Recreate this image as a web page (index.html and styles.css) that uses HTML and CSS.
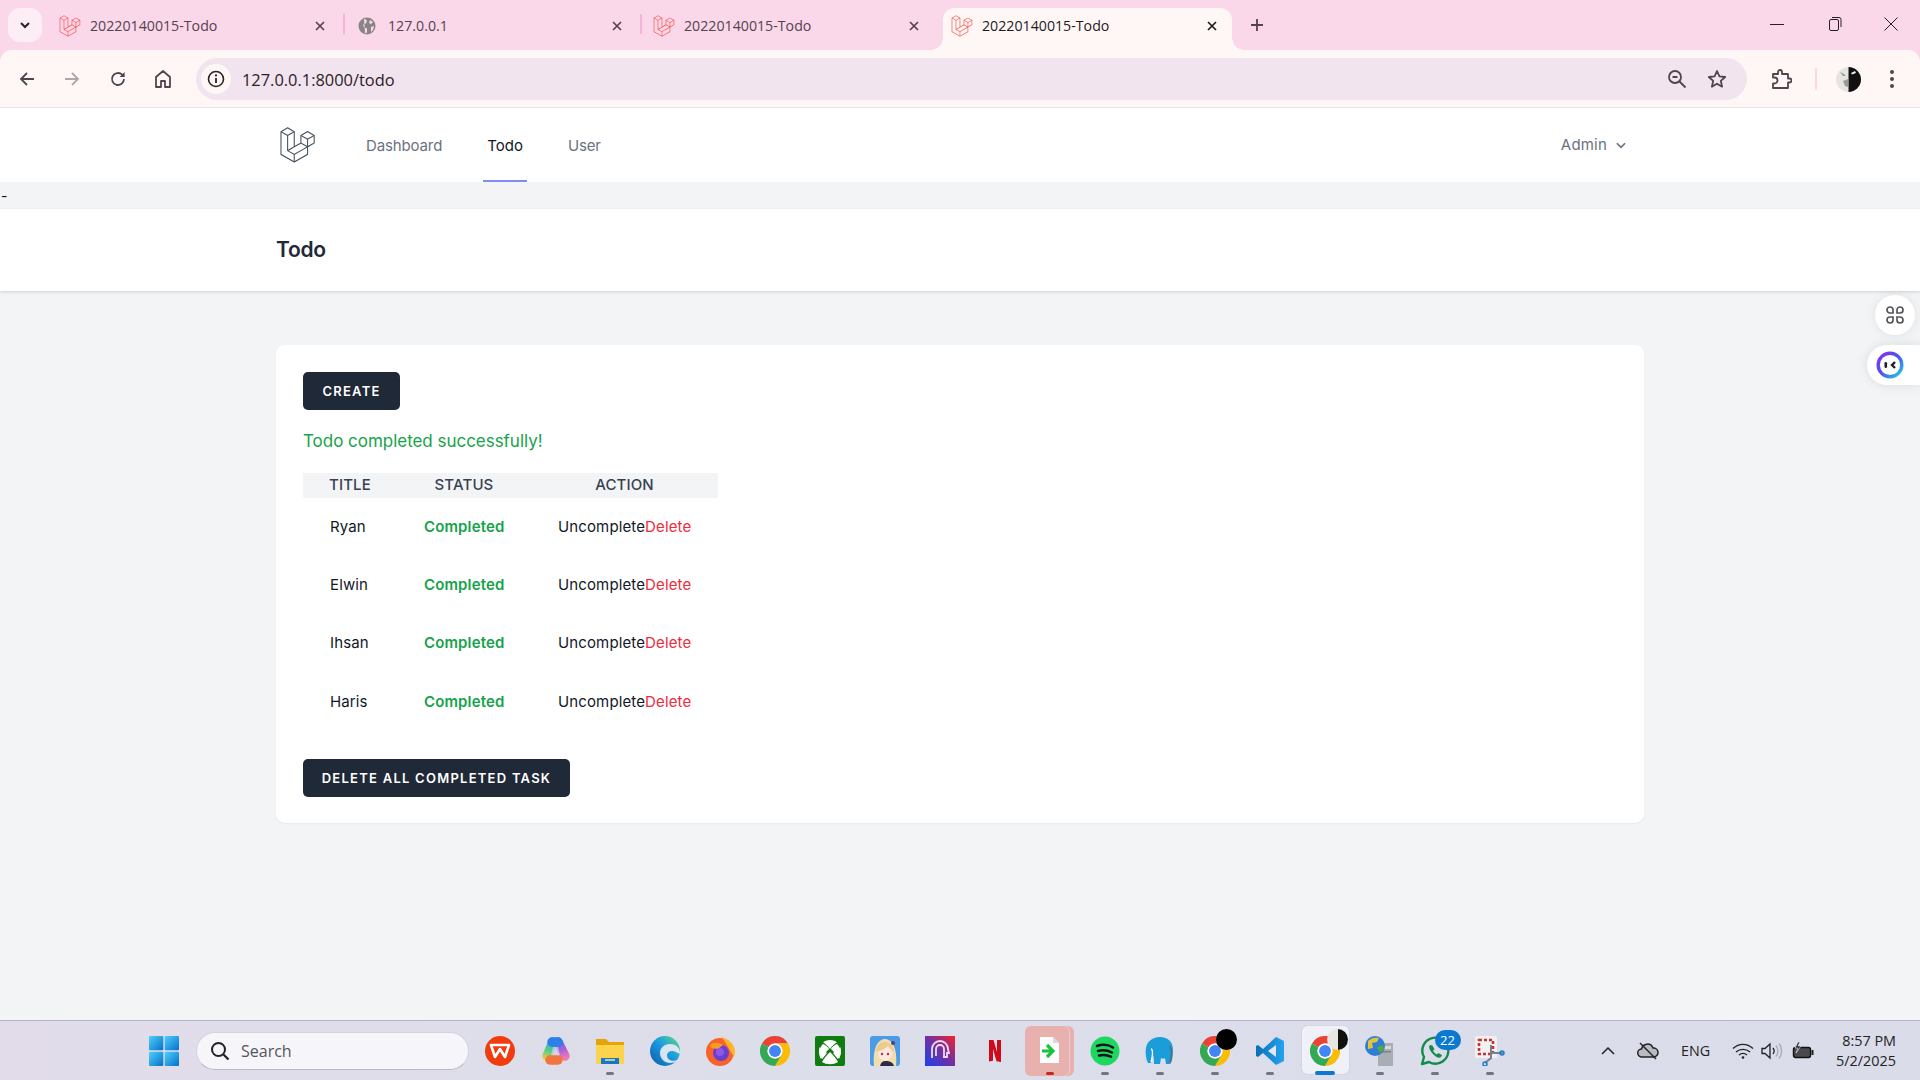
FILE: index.html
```html
<!DOCTYPE html>
<html lang="en">
<head>
    <meta charset="UTF-8">
    <title>20220140015-Todo</title>
    <link rel="stylesheet" href="styles.css">
</head>
<body>
<svg class="defs" aria-hidden="true">
    <defs>
        <linearGradient id="gWin" x1="0" y1="0" x2="1" y2="1"><stop offset="0" stop-color="#4fd0fb"/><stop offset="1" stop-color="#0670c9"/></linearGradient>
        <linearGradient id="gCopL" gradientUnits="userSpaceOnUse" x1="13" y1="5" x2="6" y2="24"><stop offset="0" stop-color="#2aa5e0"/><stop offset=".5" stop-color="#4fd08a"/><stop offset="1" stop-color="#f7c53f"/></linearGradient>
        <linearGradient id="gCopR" gradientUnits="userSpaceOnUse" x1="18" y1="5" x2="24" y2="22"><stop offset="0" stop-color="#4a6fe8"/><stop offset=".5" stop-color="#a55fe0"/><stop offset="1" stop-color="#ee78b0"/></linearGradient>
        <linearGradient id="gEdge" x1="0" y1="1" x2="1" y2="0"><stop offset="0" stop-color="#0c59a4"/><stop offset=".55" stop-color="#1b9de2"/><stop offset="1" stop-color="#5fe07a"/></linearGradient>
        <linearGradient id="gApp" x1="0" y1="1" x2="1" y2="0"><stop offset="0" stop-color="#1742f0"/><stop offset=".55" stop-color="#7a2f9a"/><stop offset="1" stop-color="#f5222d"/></linearGradient>
        <linearGradient id="gRing" x1="0" y1="0" x2="1" y2="1"><stop offset="0" stop-color="#8a2ff0"/><stop offset=".5" stop-color="#4a55f0"/><stop offset="1" stop-color="#1fd0e8"/></linearGradient>
        <linearGradient id="gVs" x1="0" y1="0" x2="1" y2="0"><stop offset="0" stop-color="#0a6fb8"/><stop offset="1" stop-color="#23a4ee"/></linearGradient>
        <symbol id="laravel" viewBox="0 0 316 316">
            <path d="M305.8 81.125C305.77 80.995 305.69 80.885 305.65 80.755C305.56 80.525 305.49 80.285 305.37 80.075C305.29 79.935 305.17 79.815 305.07 79.685C304.94 79.515 304.83 79.325 304.68 79.175C304.55 79.045 304.39 78.955 304.25 78.845C304.09 78.715 303.95 78.575 303.77 78.475L251.32 48.275C249.97 47.495 248.31 47.495 246.96 48.275L194.51 78.475C194.33 78.575 194.19 78.725 194.03 78.845C193.89 78.955 193.73 79.045 193.6 79.175C193.45 79.325 193.34 79.515 193.21 79.685C193.11 79.815 192.99 79.935 192.91 80.075C192.79 80.285 192.71 80.525 192.63 80.755C192.58 80.875 192.51 80.995 192.48 81.125C192.38 81.495 192.33 81.875 192.33 82.265V139.625L148.62 164.795V52.575C148.62 52.185 148.57 51.805 148.47 51.435C148.44 51.305 148.36 51.195 148.32 51.065C148.23 50.835 148.16 50.595 148.04 50.385C147.96 50.245 147.84 50.125 147.74 49.995C147.61 49.825 147.5 49.635 147.35 49.485C147.22 49.355 147.06 49.265 146.92 49.155C146.76 49.025 146.62 48.885 146.44 48.785L93.99 18.585C92.64 17.805 90.98 17.805 89.63 18.585L37.18 48.785C37 48.885 36.86 49.035 36.7 49.155C36.56 49.265 36.4 49.355 36.27 49.485C36.12 49.635 36.01 49.825 35.88 49.995C35.78 50.125 35.66 50.245 35.58 50.385C35.46 50.595 35.38 50.835 35.3 51.065C35.25 51.185 35.18 51.305 35.15 51.435C35.05 51.805 35 52.185 35 52.575V232.235C35 233.795 35.84 235.245 37.19 236.025L142.1 296.425C142.33 296.555 142.58 296.635 142.83 296.725C142.95 296.765 143.06 296.835 143.18 296.865C143.55 296.965 143.93 297.015 144.31 297.015C144.69 297.015 145.07 296.965 145.44 296.865C145.56 296.835 145.67 296.765 145.79 296.725C146.04 296.635 146.3 296.555 146.53 296.425L251.44 236.025C252.8 235.245 253.63 233.805 253.63 232.235V174.875L303.82 145.975C305.18 145.195 306.01 143.755 306.01 142.185V82.265C305.99 81.875 305.94 81.495 305.84 81.125H305.8ZM144.2 227.205L100.57 202.515L146.39 176.135L196.66 147.195L240.33 172.335L208.29 190.625L144.2 227.205ZM244.75 114.995V164.795L226.39 154.225L201.03 139.625V89.825L219.39 100.395L244.75 114.995ZM249.12 57.105L292.81 82.265L249.12 107.425L205.43 82.265L249.12 57.105ZM114.49 184.425L96.13 194.995V85.305L121.49 70.705L139.85 60.135V169.815L114.49 184.425ZM91.76 27.425L135.45 52.585L91.76 77.745L48.07 52.585L91.76 27.425ZM43.67 60.135L62.03 70.705L87.39 85.305V202.545V202.555V202.565C87.39 202.735 87.44 202.895 87.46 203.055C87.49 203.265 87.49 203.485 87.55 203.695V203.715C87.6 203.885 87.69 204.045 87.76 204.205C87.84 204.385 87.89 204.575 87.99 204.745C87.99 204.745 87.99 204.755 88 204.755C88.09 204.905 88.22 205.035 88.33 205.175C88.45 205.335 88.55 205.495 88.69 205.635L88.7 205.645C88.82 205.765 88.98 205.855 89.12 205.965C89.28 206.085 89.42 206.225 89.59 206.325C89.6 206.325 89.6 206.325 89.61 206.335C89.62 206.335 89.62 206.345 89.63 206.345L139.87 234.775V285.065L43.67 229.705V60.135ZM244.75 229.705L148.58 285.075V234.775L219.8 194.115L244.75 179.875V229.705ZM297.2 139.625L253.49 164.795V114.995L278.85 100.395L297.21 89.825V139.625H297.2Z" fill="currentColor"/>
        </symbol>
        <symbol id="chrome" viewBox="0 0 48 48">
            <path d="M3.2 12A24 24 0 0 1 44.8 12H24A12 12 0 0 0 13.6 18Z" fill="#ea4335"/>
            <path d="M44.8 12A24 24 0 0 1 24 48L34.4 30A12 12 0 0 0 24 12Z" fill="#fbbc04"/>
            <path d="M24 48A24 24 0 0 1 3.2 12L13.6 18A12 12 0 0 0 34.4 30Z" fill="#34a853"/>
            <circle cx="24" cy="24" r="12" fill="#fff"/>
            <circle cx="24" cy="24" r="9.5" fill="#4285f4"/>
        </symbol>
        <symbol id="close" viewBox="0 0 12 12">
            <path d="M2 2l8 8M10 2l-8 8" fill="none" stroke="currentColor" stroke-width="1.7"/>
        </symbol>
    </defs>
</svg>

<!-- tab strip -->
<div class="tabstrip">
    <div class="tabmenu">
        <svg width="12" height="12" viewBox="0 0 12 12"><path d="M2 4l4 4 4-4" fill="none" stroke="#2b2128" stroke-width="2"/></svg>
    </div>
    <div class="tab">
        <svg class="fav"><use href="#laravel"/></svg>
        <span class="tab-title">20220140015-Todo</span>
        <svg class="tab-x"><use href="#close"/></svg>
    </div>
    <div class="tab">
        <svg class="fav globe" viewBox="0 0 20 20">
            <circle cx="10" cy="10" r="8.5" fill="#8a8486"/>
            <path d="M7 2.500l3 2-1 3-3 1 1 3 3 1v4l-2 .8M13 4l3 2-2 2-2-1zM14 11l3-1-1 4-2 2z" fill="#fbd7ea"/>
        </svg>
        <span class="tab-title">127.0.0.1</span>
        <svg class="tab-x"><use href="#close"/></svg>
    </div>
    <div class="tab tab-last">
        <svg class="fav"><use href="#laravel"/></svg>
        <span class="tab-title">20220140015-Todo</span>
        <svg class="tab-x"><use href="#close"/></svg>
    </div>
    <div class="tab tab-active">
        <svg class="fav"><use href="#laravel"/></svg>
        <span class="tab-title">20220140015-Todo</span>
        <svg class="tab-x"><use href="#close"/></svg>
    </div>
    <svg class="newtab" viewBox="0 0 14 14"><path d="M7 1v12M1 7h12" fill="none" stroke="#54434e" stroke-width="1.8"/></svg>
    <div class="winctl">
        <span class="winbtn"><svg width="14" height="14" viewBox="0 0 14 14"><path d="M0 7.500h14" stroke="#222" fill="none"/></svg></span>
        <span class="winbtn"><svg width="14" height="16" viewBox="0 0 14 16"><rect x="1.500" y="3.500" width="9" height="11" rx="1.500" fill="none" stroke="#222"/><path d="M4 1.500h7a2 2 0 0 1 2 2V11" fill="none" stroke="#222"/></svg></span>
        <span class="winbtn"><svg width="14" height="14" viewBox="0 0 14 14"><path d="M.5.5l13 13M13.500.5l-13 13" stroke="#222" fill="none"/></svg></span>
    </div>
</div>

<!-- toolbar -->
<div class="toolbar">
    <div class="navbtns">
        <span class="tbtn"><svg width="18" height="18" viewBox="0 0 18 18"><path d="M16 9H3M9 3L3 9l6 6" fill="none" stroke="#54434e" stroke-width="1.8"/></svg></span>
        <span class="tbtn"><svg width="18" height="18" viewBox="0 0 18 18"><path d="M2 9h13M9 3l6 6-6 6" fill="none" stroke="#b0a6ab" stroke-width="1.8"/></svg></span>
        <span class="tbtn"><svg width="18" height="18" viewBox="0 0 18 18"><path d="M15 9a6 6 0 1 1-1.800-4.300L15 6.500" fill="none" stroke="#54434e" stroke-width="1.8"/><path d="M15.600 2v5h-5z" fill="#54434e"/></svg></span>
        <span class="tbtn"><svg width="20" height="20" viewBox="0 0 20 20"><path d="M3 18V8l7-6 7 6v10h-5v-6H8v6z" fill="none" stroke="#54434e" stroke-width="1.8" stroke-linejoin="round"/></svg></span>
    </div>
    <div class="omnibox">
        <span class="siteinfo"><svg width="18" height="18" viewBox="0 0 18 18"><circle cx="9" cy="9" r="7.500" fill="none" stroke="#2b2128" stroke-width="1.6"/><path d="M9 8v5" stroke="#2b2128" stroke-width="1.8"/><circle cx="9" cy="5.400" r="1.100" fill="#2b2128"/></svg></span>
        <span class="url">127.0.0.1:8000/todo</span>
        <span class="omni-icons">
            <span class="tbtn-s"><svg width="20" height="20" viewBox="0 0 20 20"><circle cx="8" cy="8" r="6" fill="none" stroke="#54434e" stroke-width="1.8"/><path d="M5.500 8h5M12.500 12.500l6 6" stroke="#54434e" stroke-width="1.8"/></svg></span>
            <span class="tbtn-s"><svg width="20" height="20" viewBox="0 0 20 20"><path d="M10 2l2.400 5.400 5.800.6-4.400 3.900 1.300 5.800L10 14.700l-5.100 3 1.300-5.800L1.800 8l5.800-.6z" fill="none" stroke="#54434e" stroke-width="1.8" stroke-linejoin="round"/></svg></span>
        </span>
    </div>
    <span class="tbtn ext"><svg width="22" height="22" viewBox="0 0 22 22"><path d="M3 6h5V4a2 2 0 0 1 4 0v2h6v4.500h1.500a2 2 0 0 1 0 4H18V20H3v-4.500h1.500a3 3 0 0 0 0-6H3z" fill="none" stroke="#54434e" stroke-width="1.8" stroke-linejoin="round"/></svg></span>
    <span class="tb-sep"></span>
    <span class="profile"><svg width="25" height="25" viewBox="0 0 25 25"><path d="M12.500 0a12.500 12.500 0 0 0 0 25z" fill="#e6e4e0"/><path d="M12.500 0a12.500 12.500 0 0 1 0 25z" fill="#111"/><path d="M15 6l4-2 1 2-4 1.500z" fill="#eee"/><path d="M4 5l4 2 2 2-3 0zM7 14l5-2v8l-3-1z" fill="#9c9a96"/></svg></span>
    <span class="tbtn kebab"><svg width="6" height="20" viewBox="0 0 6 20"><circle cx="3" cy="3" r="2" fill="#54434e"/><circle cx="3" cy="10" r="2" fill="#54434e"/><circle cx="3" cy="17" r="2" fill="#54434e"/></svg></span>
</div>

<!-- laravel page -->
<div class="page">
    <nav class="topnav">
        <div class="wrap topnav-in">
            <svg class="applogo"><use href="#laravel"/></svg>
            <div class="navlinks">
                <a class="navlink">Dashboard</a>
                <a class="navlink navlink-on">Todo</a>
                <a class="navlink">User</a>
            </div>
            <div class="usermenu">
                Admin
                <svg width="14" height="14" viewBox="0 0 12 12"><path d="M2.500 4.500L6 8l3.500-3.500" fill="none" stroke="#6b7280" stroke-width="1.500"/></svg>
            </div>
        </div>
    </nav>
    <div class="dashline">-</div>
    <header class="pagehead">
        <div class="wrap"><h2 class="pagetitle">Todo</h2></div>
    </header>
    <main class="content">
        <div class="wrap card">
            <a class="btn">CREATE</a>
            <p class="flash">Todo completed successfully!</p>
            <table class="todos">
                <colgroup><col class="c-title"><col class="c-status"><col class="c-action"></colgroup>
                <thead>
                    <tr><th>TITLE</th><th>STATUS</th><th>ACTION</th></tr>
                </thead>
                <tbody>
                    <tr><td>Ryan</td><td class="done">Completed</td><td><a>Uncomplete</a><a class="del">Delete</a></td></tr>
                    <tr><td>Elwin</td><td class="done">Completed</td><td><a>Uncomplete</a><a class="del">Delete</a></td></tr>
                    <tr><td>Ihsan</td><td class="done">Completed</td><td><a>Uncomplete</a><a class="del">Delete</a></td></tr>
                    <tr><td>Haris</td><td class="done">Completed</td><td><a>Uncomplete</a><a class="del">Delete</a></td></tr>
                </tbody>
            </table>
            <a class="btn btn-all">DELETE ALL COMPLETED TASK</a>
        </div>
    </main>

    <!-- floating extension widgets -->
    <div class="float-a">
        <svg width="20" height="20" viewBox="0 0 20 20" fill="none" stroke="#54565c" stroke-width="1.700"><path d="M2 5a3 3 0 0 1 6 0v3H5a3 3 0 0 1-3-3zM12 5a3 3 0 0 1 6 0 3 3 0 0 1-3 3h-3zM2 15a3 3 0 0 1 3-3h3v3a3 3 0 0 1-6 0zM12 12h3a3 3 0 0 1 0 6 3 3 0 0 1-3-3z"/></svg>
    </div>
    <div class="float-b">
        <svg width="28" height="28" viewBox="0 0 28 28"><circle cx="14" cy="14" r="11.800" fill="none" stroke="url(#gRing)" stroke-width="3.400"/><rect x="8.500" y="11" width="2.600" height="6" rx="1.300" fill="#222"/><path d="M19 11l-3 3 3 3" fill="none" stroke="#222" stroke-width="2.400"/></svg>
    </div>
</div>

<!-- windows taskbar -->
<footer class="taskbar">
    <svg class="winlogo" viewBox="0 0 30 30">
        <rect x="0" y="0" width="14.300" height="14.300" rx="1" fill="url(#gWin)"/>
        <rect x="15.700" y="0" width="14.300" height="14.300" rx="1" fill="url(#gWin)"/>
        <rect x="0" y="15.700" width="14.300" height="14.300" rx="1" fill="url(#gWin)"/>
        <rect x="15.700" y="15.700" width="14.300" height="14.300" rx="1" fill="url(#gWin)"/>
    </svg>
    <div class="searchbox">
        <svg width="20" height="20" viewBox="0 0 20 20"><circle cx="8.500" cy="8.500" r="6.500" fill="none" stroke="#222" stroke-width="2"/><path d="M13.500 13.500l5 5" stroke="#222" stroke-width="2.200"/></svg>
        <span>Search</span>
    </div>
    <div class="apps">
        <span class="app"><svg class="ico" viewBox="0 0 30 30"><circle cx="15" cy="15" r="15" fill="#f03c0e"/><path d="M6 9h18l-4 12-5-8-5 8z" fill="none" stroke="#fff" stroke-width="2.600" stroke-linejoin="round"/></svg></span>
        <span class="app"><svg class="ico" viewBox="0 0 30 30" fill="none" stroke-width="9.500" stroke-linecap="round"><path d="M13 6L7 20" stroke="url(#gCopL)"/><path d="M18 6l7 14" stroke="url(#gCopR)"/><path d="M12 6h6" stroke="#2f7fe8"/><path d="M10 24h8" stroke="#f0763f"/><path d="M13 11h5l2 8h-9z" fill="#d6cfe6" stroke="none" opacity=".75"/></svg></span>
        <span class="app app-dot"><svg class="ico" viewBox="0 0 30 30"><path d="M1 3h10l3 3h15v22H1z" fill="#e5a50a"/><path d="M1 9h28v19H1z" fill="#fcd34d"/><path d="M6 22h18v6H6z" fill="#1478c9"/><path d="M10 24h10" stroke="#ffe08a" stroke-width="1.500"/></svg></span>
        <span class="app"><svg class="ico" viewBox="0 0 30 30"><circle cx="15" cy="15" r="15" fill="url(#gEdge)"/><path d="M30 17c0-6-5-9-10-9-6 0-10 4-10 9 0 6 5 10 10 10 3 0 6-1 8-3-6 2-11 0-11-5 0-2 2-4 5-4 4 0 8 4 8 2z" fill="#e9ebf2" opacity=".92"/></svg></span>
        <span class="app"><svg class="ico" viewBox="0 0 30 30"><circle cx="15" cy="16" r="14" fill="#f9632b"/><path d="M16 0c5 4 7 2 12 9 3 5 2 9 1 12L20 6z" fill="#fdb52c"/><circle cx="16" cy="17" r="8" fill="#6a3fd0"/><path d="M5 9c3-3 9-3 13 0l-5 4-7-1z" fill="#fa9a22"/><circle cx="15" cy="16" r="4" fill="#8d58e8"/></svg></span>
        <span class="app"><svg class="ico"><use href="#chrome"/></svg></span>
        <span class="app"><svg class="ico" viewBox="0 0 30 30"><rect width="30" height="30" rx="2" fill="#107c10"/><circle cx="15" cy="15" r="11" fill="#fff"/><path d="M6 5c4 2 7 5 9 8 2-3 5-6 9-8L27 10 18 17l8 10H4l8-10-9-7z" fill="#107c10"/><path d="M15 16c3 3 6 6 8 10-5 3-11 3-16 0 2-4 5-7 8-10zM8 8c3 1 5 3 6 5-3 3-6 6-8 10-3-5-2-11 2-15zM22 8c-3 1-5 3-6 5 3 3 6 6 8 10 3-5 2-11-2-15z" fill="#fff"/></svg></span>
        <span class="app"><svg class="ico" viewBox="0 0 30 30"><rect width="30" height="30" rx="3" fill="#4a9be8"/><path d="M4 30C3 20 4 4 15 3c11 1 12 17 11 27z" fill="#f3dcae"/><ellipse cx="15" cy="17" rx="7" ry="7.500" fill="#fbe8de"/><path d="M6 16c1-8 5-10 9-10s8 3 9 10c-3-2-5-5-6-6-3 3-8 5-12 6z" fill="#eccb8d"/><circle cx="12" cy="18" r="1.200" fill="#b0304f"/><circle cx="18" cy="18" r="1.200" fill="#b0304f"/><path d="M10 30c1-4 3-5 6-5s7 1 8 5z" fill="#2c2a4a"/><circle cx="23" cy="7" r="2" fill="#5b3a7a"/></svg></span>
        <span class="app"><svg class="ico" viewBox="0 0 30 30"><rect width="30" height="30" fill="url(#gApp)"/><path d="M7 22v-9a8 8 0 0 1 16 0c0 2 1 3 1 4h-2v4h-4M11 20v-7a4 4 0 0 1 8 0v7" fill="none" stroke="#e9dcf4" stroke-width="1.800"/></svg></span>
        <span class="app"><svg class="ico" viewBox="0 0 30 30"><path d="M9 4h4.500l3.500 12V4h4v22l-4.500-.8L13 13v11.800l-4 .8z" fill="#cf0a1a"/></svg></span>
        <span class="app app-open"><svg class="ico" viewBox="0 0 30 30"><path d="M6 2h13l6 6v20H6z" fill="#fdfdfd"/><path d="M19 2l6 6h-6z" fill="#d8d8d8"/><path d="M8 16h9M13 10l6 6-6 6" fill="none" stroke="#17c43c" stroke-width="3.200"/></svg></span>
        <span class="app app-dot"><svg class="ico" viewBox="0 0 30 30"><circle cx="15" cy="15" r="14.500" fill="#1ed760"/><path d="M7 10c6-2 11-1.500 16 1.500M8 15c5-1.500 9-1 14 1.500M9 19.500c4-1 8-.8 12 1.200" fill="none" stroke="#14141a" stroke-width="2.500" stroke-linecap="round"/></svg></span>
        <span class="app app-dot"><svg class="ico" viewBox="0 0 30 30"><path d="M15 1c8 0 13 5 13 13 0 6-1 12-3 14h-4l-1-6c-1 1-3 1-4 0l-1 6H9c0-3 0-6-1-9l-2 8H3C1 23 0 17 1 12 2 5 8 1 15 1z" fill="#1a9dd9"/><path d="M6 13c2 0 2 6 0 13" fill="none" stroke="#fff" stroke-width="1.300"/><path d="M25 10c2 5 2 11 0 17" fill="none" stroke="#5b6a78" stroke-width="1.500"/></svg></span>
        <span class="app app-dot"><svg class="ico"><use href="#chrome"/></svg><i class="blob blob-black"></i></span>
        <span class="app app-dot"><svg class="ico" viewBox="0 0 30 30"><path d="M21 1l8 4v20l-8 4-13-12-5 4-2-1V10l2-1 5 4z" fill="url(#gVs)"/><path d="M21 9v12l-8-6z" fill="#e4e6f0"/></svg></span>
        <span class="app app-active"><svg class="ico"><use href="#chrome"/></svg><i class="blob blob-half"></i></span>
        <span class="app app-dot"><svg class="ico" viewBox="0 0 30 30"><rect x="13" y="7" width="15" height="23" fill="#a9aeb3"/><rect x="15" y="10" width="11" height="3" fill="#d7dadd"/><rect x="15" y="15" width="11" height="1.500" fill="#7c8186"/><circle cx="10" cy="10" r="10" fill="#2f7fd6"/><path d="M3 5c3-3 7-4 11-3l-2 4-5 1 1 5-5 1z" fill="#e2c33a"/><path d="M12 11l6-2 1 5-4 3z" fill="#53a83c"/></svg></span>
        <span class="app app-dot"><svg class="ico" viewBox="0 0 30 30"><path d="M2 28l2-7A13 13 0 1 1 9 26z" fill="none" stroke="#128c4a" stroke-width="2.400" stroke-linejoin="round"/><path d="M10 9c-2 2 0 6 3 9s6 5 8 3l1-2-4-2-1 1.500c-2-1-3-2-4-4l1.500-1-2-4z" fill="#128c4a"/></svg><i class="badge">22</i></span>
        <span class="app app-dot"><svg class="ico" viewBox="0 0 30 30"><rect width="22" height="22" rx="2" fill="#f1f1f4"/><rect x="4" y="4" width="14" height="14" fill="none" stroke="#c8372d" stroke-width="2.600" stroke-dasharray="3 2"/><path d="M16 9v13l-6 5M15 17l13 0" fill="none" stroke="#78808a" stroke-width="2"/><circle cx="10" cy="28" r="2" fill="none" stroke="#1a7fd0" stroke-width="1.500"/><circle cx="27" cy="17" r="2" fill="none" stroke="#1a7fd0" stroke-width="1.500"/></svg></span>
    </div>
    <div class="tray">
        <svg class="t-chev" width="14" height="10" viewBox="0 0 14 10"><path d="M1 8l6-6 6 6" fill="none" stroke="#222" stroke-width="1.500"/></svg>
        <svg class="t-cloud" width="22" height="20" viewBox="0 0 22 20"><path d="M5 16a4 4 0 0 1-.5-8A6 6 0 0 1 16 7a4.500 4.500 0 0 1 1 9z" fill="#b9bac2" stroke="#222" stroke-width="1.500"/><path d="M3 2l16 16" stroke="#222" stroke-width="1.500"/></svg>
        <span class="t-lang">ENG</span>
        <svg class="t-wifi" width="22" height="18" viewBox="0 0 22 18" fill="none" stroke="#222" stroke-width="1.400"><path d="M1 6.500c6-5.500 14-5.500 20 0M4 10c4-3.500 10-3.500 14 0M7 13c2.500-2 5.500-2 8 0"/><circle cx="11" cy="15.500" r="1.300" fill="#222" stroke="none"/></svg>
        <svg class="t-vol" width="22" height="18" viewBox="0 0 22 18" fill="none" stroke-width="1.300"><path d="M1 6.500h3L9 2v14l-5-4.500H1z" stroke="#222"/><path d="M12 6c1.500 2 1.500 4 0 6" stroke="#222"/><path d="M15 3.500c2.500 3.500 2.500 7.500 0 11M18 1.500c3.500 4.500 3.500 10.500 0 15" stroke="#a8a9b3"/></svg>
        <svg class="t-batt" width="22" height="18" viewBox="0 0 22 18"><rect x="1.500" y="5.500" width="17" height="10" rx="2" fill="#4a4a4e" stroke="#111" stroke-width="1.400"/><rect x="19.500" y="8" width="2" height="5" fill="#222"/><path d="M6 0L3 6h3l-2 5 5-7H6l2-4z" fill="#222" stroke="#dcdeea" stroke-width=".7"/></svg>
        <div class="clock"><span>8:57 PM</span><span>5/2/2025</span></div>
    </div>
</footer>
</body>
</html>
```

FILE: styles.css
```css
* {
    margin: 0;
    padding: 0;
    box-sizing: border-box;
}

html, body {
    width: 1920px;
    height: 1080px;
    overflow: hidden;
}

body {
    display: flex;
    flex-direction: column;
    font-family: Inter, "Liberation Sans", sans-serif;
    background: #fbd7ea;
}

svg {
    display: block;
    flex: none;
}

.defs {
    width: 0;
    height: 0;
}

/* tab strip */
.tabstrip {
    height: 50px;
    flex: none;
    display: flex;
    align-items: flex-end;
    padding-left: 8px;
    background: #fbd7ea;
    font-family: "Open Sans", "Noto Sans", sans-serif;
}

.tabmenu {
    width: 34px;
    height: 34px;
    margin: 0 6px 8px 0;
    display: flex;
    align-items: center;
    justify-content: center;
    border-radius: 12px;
    background: #fdeef6;
}

.tab {
    width: 297px;
    height: 42px;
    display: flex;
    align-items: center;
    padding: 0 19px 7px 12px;
    color: #54434e;
    position: relative;
}

.tab::after {
    content: "";
    position: absolute;
    right: 0;
    top: 6px;
    width: 2px;
    height: 20px;
    background: #f8b2d8;
}

.tab-last::after {
    display: none;
}

.tab-active {
    width: 289px;
    margin: 0 4px;
    padding-left: 9px;
    padding-right: 14px;
    color: #1f1a1d;
    background: #fff7f6;
    border-radius: 12px 12px 0 0;
}

.tab-active::before,
.tab-active::after {
    content: "";
    position: absolute;
    top: auto;
    bottom: 0;
    width: 12px;
    height: 12px;
    background: radial-gradient(circle at 0 0, #fbd7ea 11.500px, #fff7f6 12px);
}

.tab-active::before {
    left: -12px;
}

.tab-active::after {
    left: auto;
    right: -12px;
    background: radial-gradient(circle at 100% 0, #fbd7ea 11.500px, #fff7f6 12px);
}

.fav {
    width: 24px;
    height: 24px;
    margin: 0 9px 0 -3px;
    color: #f9524a;
}

.globe {
    width: 20px;
    height: 20px;
    margin: 0 11px 0 0;
}

.tab-title {
    flex: 1;
    font-size: 14.200px;
    white-space: nowrap;
}

.tab-x {
    width: 12px;
    height: 12px;
}

.newtab {
    width: 14px;
    height: 14px;
    margin: 0 0 18px 14px;
}

.winctl {
    margin-left: auto;
    align-self: flex-start;
    display: flex;
    padding-right: 1px;
}

.winbtn {
    width: 56px;
    height: 48px;
    display: flex;
    align-items: center;
    justify-content: center;
}

.winbtn:first-child {
    margin-right: 2px;
    margin-left: -2px;
}

/* toolbar */
.toolbar {
    height: 58px;
    flex: none;
    display: flex;
    align-items: center;
    padding: 1px 4px 0;
    background: #fff7f6;
    border-bottom: 1px solid #f0dfe8;
    border-radius: 12px 12px 0 0;
}

.navbtns {
    display: flex;
}

.tbtn {
    width: 45.500px;
    height: 40px;
    display: flex;
    align-items: center;
    justify-content: center;
}

.omnibox {
    width: 1551px;
    height: 42px;
    margin-left: 10px;
    display: flex;
    align-items: center;
    padding: 0 10px 0 5px;
    border-radius: 21px;
    background: #f1e4ee;
    font-family: "Open Sans", "Noto Sans", sans-serif;
}

.siteinfo {
    width: 30px;
    height: 30px;
    display: flex;
    align-items: center;
    justify-content: center;
    border-radius: 50%;
    background: #fff7f6;
}

.url {
    margin-left: 11px;
    font-size: 16.400px;
    color: #2b2128;
}

.omni-icons {
    margin-left: auto;
    display: flex;
}

.tbtn-s {
    width: 40px;
    height: 40px;
    display: flex;
    align-items: center;
    justify-content: center;
}

.ext {
    margin-left: 11px;
}

.tb-sep {
    width: 2px;
    height: 22px;
    margin-left: 11px;
    background: #fbd7ea;
}

.profile {
    margin-left: 19px;
}

.kebab {
    margin-left: 9px;
    width: 44px;
}

/* page */
.page {
    flex: 1;
    display: flex;
    flex-direction: column;
    position: relative;
    background: #f3f4f6;
}

.wrap {
    width: 1368px;
    margin: 0 auto;
}

.topnav {
    height: 74px;
    flex: none;
    background: #fff;
}

.topnav-in {
    height: 100%;
    display: flex;
    align-items: center;
}

.applogo {
    width: 40px;
    height: 40px;
    color: #4b5563;
}

.navlinks {
    height: 100%;
    margin-left: 46px;
    display: flex;
    gap: 37px;
}

.navlink {
    padding: 2px 4px 0;
    display: flex;
    align-items: center;
    font-size: 15px;
    letter-spacing: -.13px;
    color: #6b7280;
    border-bottom: 2px solid transparent;
}

.navlink-on {
    color: #111827;
    border-bottom-color: #818cf8;
    letter-spacing: 0;
}

.usermenu {
    margin-left: auto;
    padding: 0 16px 1px 0;
    display: flex;
    align-items: center;
    gap: 7px;
    font-size: 15px;
    letter-spacing: .2px;
    color: #6b7280;
}

.dashline {
    height: 27px;
    flex: none;
    padding-left: 1px;
    font-size: 14px;
    line-height: 28px;
    color: #111;
}

.pagehead {
    height: 82px;
    flex: none;
    display: flex;
    align-items: center;
    padding-bottom: 2px;
    background: #fff;
    box-shadow: 0 1px 3px rgba(0, 0, 0, .15);
}

.pagetitle {
    font-size: 21px;
    font-weight: 600;
    letter-spacing: -.25px;
    color: #1f2937;
}

.content {
    padding-top: 54px;
}

.card {
    padding: 27px 27px 26px;
    background: #fff;
    border-radius: 9px;
    box-shadow: 0 1px 2px rgba(0, 0, 0, .05);
}

.btn {
    display: block;
    width: 97px;
    height: 38px;
    text-align: center;
    line-height: 38px;
    font-size: 13px;
    font-weight: 600;
    letter-spacing: 1.250px;
    color: #fff;
    background: #1f2937;
    border-radius: 5px;
}

.btn-all {
    width: 267px;
    margin-top: 28px;
}

.flash {
    margin-top: 17px;
    font-size: 17px;
    line-height: 28px;
    letter-spacing: -.03px;
    color: #16a34a;
}

.todos {
    width: 415px;
    margin-top: 18px;
    table-layout: fixed;
    border-collapse: collapse;
    font-size: 15px;
    letter-spacing: .13px;
    color: #111827;
}

.c-title {
    width: 94px;
}

.c-status {
    width: 134px;
}

.c-action {
    width: 187px;
}

.todos th {
    height: 25px;
    padding-bottom: 2px;
    font-weight: 500;
    color: #374151;
    background: #f3f4f6;
}

.todos td {
    height: 58.300px;
    padding: 0 0 2px 27px;
    white-space: nowrap;
}

.done {
    font-weight: 600;
    color: #16a34a;
}

.del {
    color: #ef2b3c;
}

/* floating widgets */
.float-a {
    position: absolute;
    top: 187px;
    left: 1875px;
    width: 40px;
    height: 40px;
    display: flex;
    align-items: center;
    justify-content: center;
    border-radius: 50%;
    background: #fff;
    box-shadow: 0 0 12px rgba(0, 0, 0, .08);
}

.float-b {
    position: absolute;
    top: 237px;
    left: 1867px;
    width: 53px;
    height: 40px;
    display: flex;
    align-items: center;
    padding-left: 9px;
    border-radius: 20px 0 0 20px;
    background: #fff;
    box-shadow: 0 0 12px rgba(0, 0, 0, .1);
}

/* taskbar */
.taskbar {
    height: 60px;
    flex: none;
    display: flex;
    align-items: center;
    padding-left: 149px;
    background: linear-gradient(90deg, #e2dcea, #dcdeea 40%, #dadcea);
    border-top: 1px solid #b5b6c4;
    font-family: "Open Sans", "Noto Sans", sans-serif;
}

.winlogo {
    width: 30px;
    height: 30px;
}

.searchbox {
    width: 273px;
    height: 38px;
    margin-left: 17px;
    display: flex;
    align-items: center;
    gap: 11px;
    padding-left: 13px;
    font-size: 16px;
    color: #55565c;
    background: #f5f5fa;
    border: 1px solid #d3d3dd;
    border-bottom-color: #b9b9c4;
    border-radius: 19px;
}

.apps {
    margin-left: 3.500px;
    display: flex;
}

.app {
    width: 55px;
    height: 59px;
    display: flex;
    align-items: center;
    justify-content: center;
    position: relative;
}

.ico {
    width: 30px;
    height: 30px;
}

.app-dot::after {
    content: "";
    position: absolute;
    left: 23.500px;
    bottom: 5px;
    width: 8px;
    height: 3px;
    border-radius: 2px;
    background: #74757f;
}

.app-open::before {
    content: "";
    position: absolute;
    left: 2.500px;
    top: 5px;
    width: 44px;
    height: 50px;
    border-radius: 6px;
    background: #e9b1ae;
    box-shadow: 1px 0 0 #e2cdd4, 5px 0 0 #e9b1ae;
}

.app-open .ico {
    position: relative;
    margin-right: 2px;
    margin-bottom: 2px;
}

.app-open::after {
    content: "";
    position: absolute;
    left: 23.500px;
    bottom: 5px;
    width: 8px;
    height: 3px;
    border-radius: 2px;
    background: #c5281c;
}

.app-active::before {
    content: "";
    position: absolute;
    left: 4px;
    top: 5px;
    width: 47px;
    height: 48px;
    border-radius: 5px;
    background: #eff0f8;
    box-shadow: 0 0 1px rgba(0, 0, 0, .25);
}

.app-active .ico {
    position: relative;
}

.app-active::after {
    content: "";
    position: absolute;
    left: 17px;
    bottom: 5px;
    width: 20px;
    height: 4px;
    border-radius: 2px;
    background: #0f78d4;
}

.blob {
    position: absolute;
    top: 8px;
    left: 28px;
    width: 21px;
    height: 21px;
    border-radius: 50%;
}

.blob-black {
    background: #000;
}

.blob-half {
    left: 29.500px;
    background: linear-gradient(90deg, #e8e6e2 50%, #111 50%);
}

.badge {
    position: absolute;
    top: 9px;
    left: 27px;
    width: 26px;
    height: 20px;
    border-radius: 10px;
    text-align: center;
    font-style: normal;
    font-size: 13px;
    line-height: 20px;
    color: #fff;
    background: #0b79d0;
}

.tray {
    margin-left: auto;
    display: flex;
    align-items: center;
    padding-right: 24px;
}

.t-cloud {
    margin-left: 22px;
}

.t-lang {
    margin-left: 22px;
    width: 28px;
    font-size: 14.300px;
    color: #222;
}

.t-wifi {
    margin-left: 23px;
}

.t-vol {
    margin-left: 7px;
}

.t-batt {
    margin-left: 9px;
}

.clock {
    margin-left: 22px;
    display: flex;
    flex-direction: column;
    align-items: flex-end;
    font-size: 14.400px;
    line-height: 20px;
    color: #222;
}
```
